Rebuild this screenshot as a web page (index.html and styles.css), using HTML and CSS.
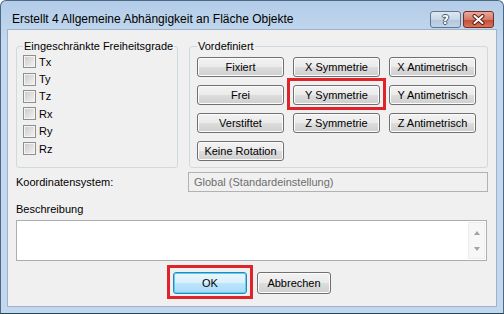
FILE: index.html
```html
<!DOCTYPE html>
<html lang="de">

<head>
    <meta charset="UTF-8">
    <title>Allgemeine Abhängigkeit</title>
    <link rel="stylesheet" href="styles.css">
</head>

<body>
    <div class="window">
        <div class="titlebar">
            <span class="title">Erstellt 4 Allgemeine Abhängigkeit an Fläche Objekte</span>
            <div class="caption-buttons">
                <button class="cap help"><span>?</span></button>
                <button class="cap close">
                    <svg width="13" height="11" viewBox="0 0 13 11">
                        <path d="M2.5 2 L10.5 9 M10.5 2 L2.5 9" stroke="#5a1f16" stroke-width="4" stroke-linecap="round" />
                        <path d="M2.5 2 L10.5 9 M10.5 2 L2.5 9" stroke="#ffffff" stroke-width="2" stroke-linecap="round" />
                    </svg>
                </button>
            </div>
        </div>

        <div class="client">
            <div class="groups">
                <fieldset class="group dof">
                    <legend>Eingeschränkte Freiheitsgrade</legend>
                    <label class="check"><input type="checkbox"> Tx</label>
                    <label class="check"><input type="checkbox"> Ty</label>
                    <label class="check"><input type="checkbox"> Tz</label>
                    <label class="check"><input type="checkbox"> Rx</label>
                    <label class="check"><input type="checkbox"> Ry</label>
                    <label class="check"><input type="checkbox"> Rz</label>
                </fieldset>

                <fieldset class="group presets">
                    <legend>Vordefiniert</legend>
                    <div class="preset-grid">
                        <button class="btn">Fixiert</button>
                        <button class="btn">X Symmetrie</button>
                        <button class="btn">X Antimetrisch</button>
                        <button class="btn">Frei</button>
                        <button class="btn marked">Y Symmetrie</button>
                        <button class="btn">Y Antimetrisch</button>
                        <button class="btn">Verstiftet</button>
                        <button class="btn">Z Symmetrie</button>
                        <button class="btn">Z Antimetrisch</button>
                        <button class="btn">Keine Rotation</button>
                    </div>
                </fieldset>
            </div>

            <div class="coord-row">
                <span>Koordinatensystem:</span>
                <div class="textbox disabled">Global (Standardeinstellung)</div>
            </div>

            <div class="desc-label">Beschreibung</div>
            <div class="memo">
                <div class="memo-scroll">
                    <span class="arrow up"></span>
                    <span class="arrow down"></span>
                </div>
            </div>

            <div class="dialog-buttons">
                <button class="btn default marked">OK</button>
                <button class="btn">Abbrechen</button>
            </div>
        </div>
    </div>
</body>

</html>
```

FILE: styles.css
```css
body {
    margin: 0;
    font-family: "Liberation Sans", Arial, sans-serif;
    font-size: 11px;
    color: #000000;
}

/* window frame */
.window {
    box-sizing: border-box;
    width: 504px;
    height: 314px;
    border: 1px solid #4d6882;
    border-bottom-color: #23474f;
    border-radius: 6px 6px 0 0;
    background: linear-gradient(#b3cce8, #c4d9ef 40px, #c3d8ee);
    display: flex;
    flex-direction: column;
}

.titlebar {
    height: 28px;
    display: flex;
    align-items: flex-start;
    justify-content: space-between;
    padding: 0 9px 0 11px;
}

.title {
    margin-top: 11px;
    font-size: 12px;
    line-height: 14px;
}

.caption-buttons {
    display: flex;
    gap: 2px;
    margin-top: 10px;
}

.cap {
    width: 31px;
    height: 17px;
    padding: 0;
    border: 1px solid #5f7690;
    border-radius: 3px;
    display: flex;
    align-items: center;
    justify-content: center;
}

.help {
    background: linear-gradient(#dfe8f2, #c8d6e6 50%, #b3c6dc 51%, #c2d3e6);
}

.help span {
    font-family: "DejaVu Sans", sans-serif;
    font-weight: bold;
    font-size: 12px;
    color: #ffffff;
    text-shadow: 1px 0 #3f5874, -1px 0 #3f5874, 0 1px #3f5874, 0 -1px #3f5874;
}

.close {
    border-color: #7a2a1f;
    background: linear-gradient(#e9a99b, #d57a68 50%, #c24a33 51%, #d7735c);
}

/* client area */
.client {
    flex: 1;
    margin: 0 6px 6px;
    border: 1px solid #9db3ca;
    background-color: #f0f0f0;
    padding: 9px 8px 0;
}

.groups {
    display: flex;
    gap: 11px;
}

.group {
    margin: 0;
    border: 1px solid #d0d9e0;
    border-radius: 3px;
    min-inline-size: 0;
}

.group legend {
    padding: 0 1px;
    line-height: 14px;
}

.dof {
    width: 162px;
    box-sizing: border-box;
    padding: 0 0 8px 6px;
}

.presets {
    flex: 1;
    padding: 4px 7px 6px;
}

.check {
    display: flex;
    align-items: center;
    gap: 3px;
    height: 17.4px;
}

.check input {
    appearance: none;
    margin: 0;
    width: 13px;
    height: 13px;
    border: 1px solid #8e8f8f;
    box-shadow: inset 0 0 0 1px #f4f4f4;
    background: linear-gradient(135deg, #c9c9c9, #f4f4f4);
}

.preset-grid {
    display: grid;
    grid-template-columns: repeat(3, 87px);
    grid-auto-rows: 20px;
    gap: 8px 9px;
}

/* push buttons */
.btn {
    position: relative;
    font: inherit;
    color: #000000;
    padding: 0;
    border: 1px solid #707070;
    border-radius: 3px;
    background: linear-gradient(#f2f2f2, #ebebeb 50%, #dddddd 51%, #cfcfcf);
    box-shadow: inset 0 0 0 1px #fcfcfc;
}

.btn.default {
    border-color: #3c7fb1;
    background: linear-gradient(#eaf6fd, #d9f0fc 50%, #bee6fd 51%, #a7d9f5);
    box-shadow: inset 0 0 0 1px #48d6fb;
}

/* red highlight frame drawn over the button */
.marked::after {
    content: "";
    position: absolute;
    inset: -8px -7px -6px -7px;
    border: 3px solid #e0222b;
}

/* lower fields */
.coord-row {
    display: grid;
    grid-template-columns: 172px 1fr;
    align-items: center;
    margin-top: 4px;
}

.textbox {
    box-sizing: border-box;
    height: 20px;
    border: 1px solid #b2b2b2;
    padding-left: 5px;
    line-height: 18px;
}

.textbox.disabled {
    color: #6d6d6d;
    background-color: #f0f0f0;
}

.desc-label {
    margin-top: 9px;
    line-height: 16px;
}

.memo {
    box-sizing: border-box;
    height: 41px;
    margin: 3px 1px 0 0;
    border: 1px solid #abadb3;
    background-color: #ffffff;
    display: flex;
    justify-content: flex-end;
    padding: 1px;
}

.memo-scroll {
    box-sizing: border-box;
    width: 17px;
    border: 1px solid #ececec;
    background-color: #f7f7f7;
    display: flex;
    flex-direction: column;
    justify-content: space-between;
    align-items: center;
    padding: 8px 0 7px;
}

.arrow {
    width: 0;
    height: 0;
    border-left: 3.5px solid transparent;
    border-right: 3.5px solid transparent;
}

.arrow.up {
    border-bottom: 4px solid #a3a3a3;
}

.arrow.down {
    border-top: 4px solid #a3a3a3;
}

.dialog-buttons {
    display: flex;
    justify-content: center;
    gap: 10px;
    margin-top: 11px;
}

.dialog-buttons .btn {
    width: 74px;
    height: 22px;
}
```
